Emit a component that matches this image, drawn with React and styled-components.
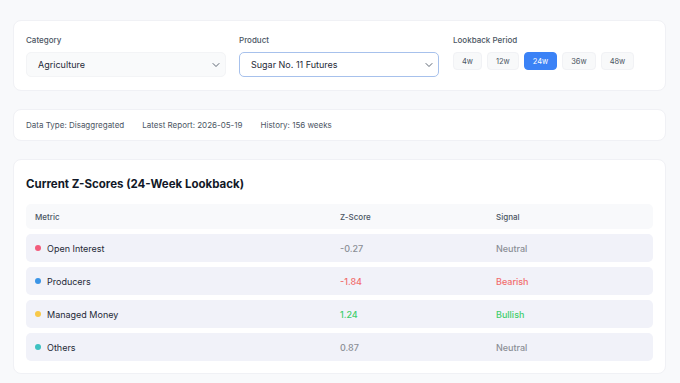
import React, { useState } from 'react'
import styled, { createGlobalStyle } from 'styled-components'

const Global = createGlobalStyle`
body {
    margin: 0;
    background: #f8f9fb;
    font-family: Inter, 'Liberation Sans', sans-serif;
    color: #1f2937;
}
`
const Page = styled.div`
display: flex;
flex-direction: column;
gap: 18px;
padding: 20px 14px 0 13px;
`
const Card = styled.div`
background: #ffffff;
border: 1px solid #f0f1f5;
border-radius: 8px;
padding: ${p => p.$pad || '13px 12px'};
`
const Controls = styled.div`
display: flex;
gap: 13px;
`
const Field = styled.div`
display: flex;
flex-direction: column;
gap: 6px;
margin-right: ${p => p.$mr || '0'};
`
const Label = styled.div`
font-size: 8px;
font-weight: 500;
color: #4b5563;
line-height: 12px;
`
const Select = styled.div`
width: 200px;
height: 25px;
box-sizing: border-box;
display: flex;
align-items: center;
justify-content: space-between;
padding: 0 3px 0 11px;
border-radius: 5px;
font-size: 9px;
color: #1f2937;
background: ${p => p.$focus ? '#ffffff' : '#f9fafb'};
border: 1px solid ${p => p.$focus ? '#a7c1ec' : '#f3f4f6'};
`
const Periods = styled.div`
display: flex;
gap: 5px;
`
const PeriodBtn = styled.button`
height: 18px;
padding: 0 8px;
border: 1px solid ${p => p.$active ? '#3b82f6' : '#f1f2f5'};
border-radius: 4px;
background: ${p => p.$active ? '#3b82f6' : '#f8f9fa'};
color: ${p => p.$active ? '#ffffff' : '#4b5563'};
font-family: inherit;
font-size: 7.5px;
cursor: pointer;
`
const Meta = styled.div`
display: flex;
gap: 18px;
font-size: 8px;
color: #4b5563;
line-height: 12px;
`
const Title = styled.h2`
margin: 0 0 12px;
font-size: 11.5px;
font-weight: 700;
color: #111827;
line-height: 16px;
`
const Table = styled.div`
display: flex;
flex-direction: column;
gap: 5px;
`
const Row = styled.div`
display: grid;
grid-template-columns: 305px 156px 1fr;
align-items: center;
height: ${p => p.$head ? '25px' : '28px'};
border-radius: 5px;
background: ${p => p.$head ? '#f8f9fb' : '#f1f2f9'};
font-size: ${p => p.$head ? '8px' : '9px'};
font-weight: ${p => p.$head ? 500 : 400};
color: ${p => p.$head ? '#4b5563' : '#1f2937'};
`
const Cell = styled.div`
padding-left: 9px;
display: flex;
align-items: center;
gap: 6px;
color: ${p => p.$color || 'inherit'};
font-weight: ${p => p.$color ? 500 : 'inherit'};
`
const Dot = styled.span`
width: 6px;
height: 6px;
border-radius: 50%;
background: ${p => p.$c};
`

const Chevron = () => (
    <svg width="12" height="12" viewBox="0 0 24 24" fill="none" stroke="#4b5563" strokeWidth="1.8" strokeLinecap="round" strokeLinejoin="round">
        <path d="m6 9 6 6 6-6"/>
    </svg>
)

const tone = { Neutral: '#8b8f96', Bearish: '#f26d6d', Bullish: '#3fce6c' }

const rows = [
    { name: 'Open Interest', dot: '#f25c7c', z: '-0.27', sig: 'Neutral' },
    { name: 'Producers', dot: '#3b95e6', z: '-1.84', sig: 'Bearish' },
    { name: 'Managed Money', dot: '#f8c94a', z: '1.24', sig: 'Bullish' },
    { name: 'Others', dot: '#3ec1c1', z: '0.87', sig: 'Neutral' },
]

export default function App() {
    const [period, setPeriod] = useState('24w')

    return (
        <>
            <Global/>
            <Page>
                <Card $pad="13px 12px 13px 12px">
                    <Controls>
                        <Field>
                            <Label>Category</Label>
                            <Select>Agriculture<Chevron/></Select>
                        </Field>
                        <Field $mr="1px">
                            <Label>Product</Label>
                            <Select $focus>Sugar No. 11 Futures<Chevron/></Select>
                        </Field>
                        <Field>
                            <Label>Lookback Period</Label>
                            <Periods>
                                {['4w','12w','24w','36w','48w'].map(p =>
                                    <PeriodBtn key={p} $active={p === period} onClick={() => setPeriod(p)}>{p}</PeriodBtn>
                                )}
                            </Periods>
                        </Field>
                    </Controls>
                </Card>
                <Card $pad="9px 12px">
                    <Meta>
                        <span>Data Type: Disaggregated</span>
                        <span>Latest Report: 2026-05-19</span>
                        <span>History: 156 weeks</span>
                    </Meta>
                </Card>
                <Card $pad="16px 12px 12px 12px">
                    <Title>Current Z-Scores (24-Week Lookback)</Title>
                    <Table>
                        <Row $head>
                            <Cell>Metric</Cell>
                            <Cell>Z-Score</Cell>
                            <Cell>Signal</Cell>
                        </Row>
                        {rows.map(r =>
                            <Row key={r.name}>
                                <Cell><Dot $c={r.dot}/>{r.name}</Cell>
                                <Cell $color={tone[r.sig]}>{r.z}</Cell>
                                <Cell $color={tone[r.sig]}>{r.sig}</Cell>
                            </Row>
                        )}
                    </Table>
                </Card>
            </Page>
        </>
    )
}
